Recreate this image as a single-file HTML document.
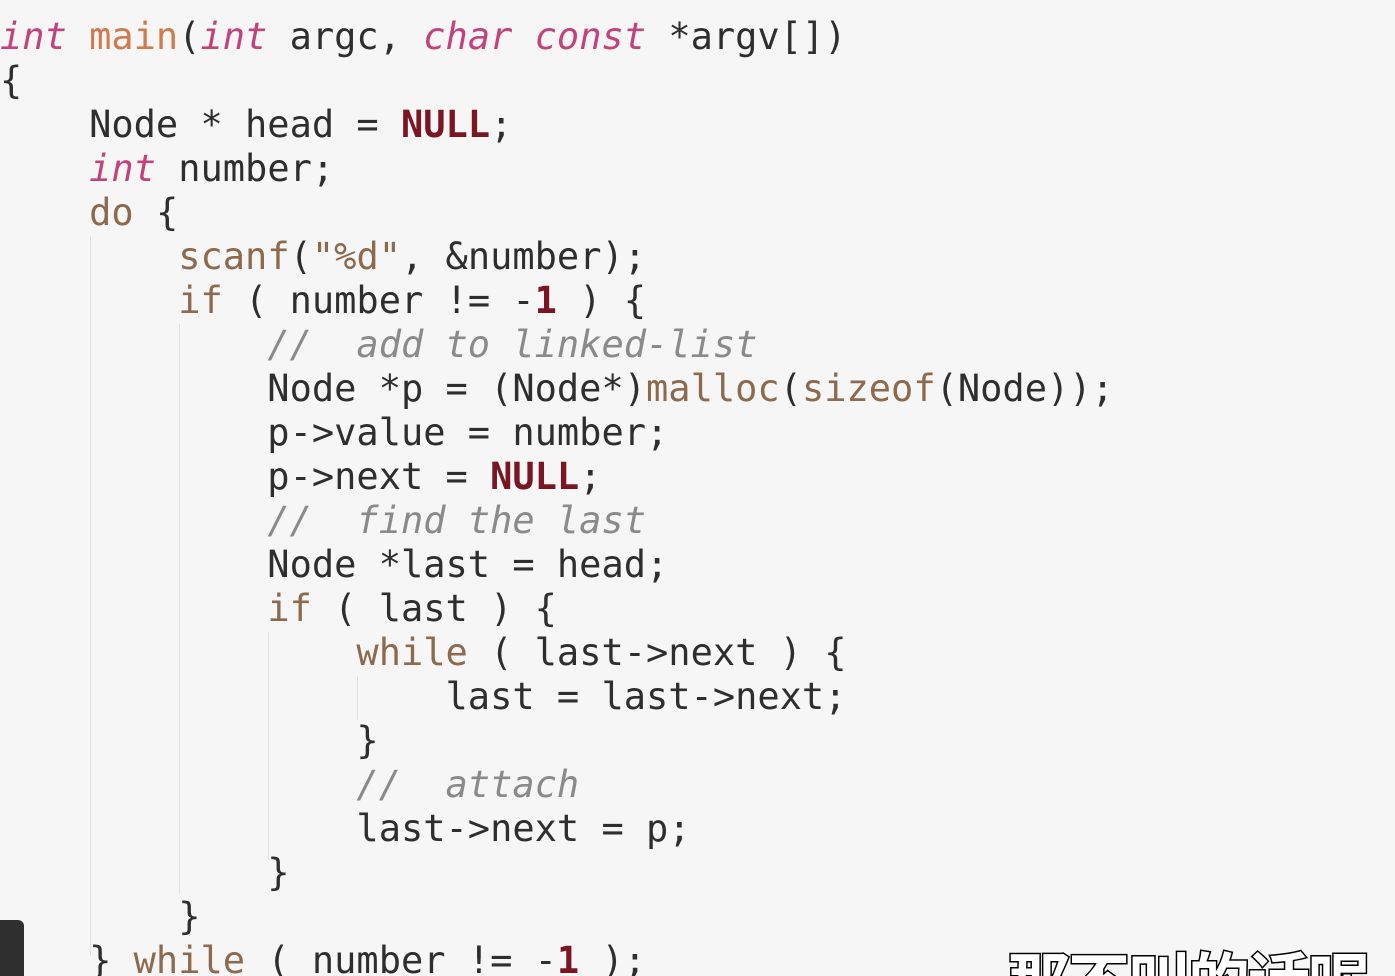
<!DOCTYPE html>
<html><head><meta charset="utf-8"><style>
html,body{margin:0;padding:0;width:1395px;height:976px;overflow:hidden;background:#f6f6f6;position:relative}
pre{position:absolute;left:0;top:15px;margin:0;font-family:"DejaVu Sans Mono","Liberation Mono",monospace;font-size:37px;line-height:44px;color:#2e2e2e;}
.k{color:#c4427c;font-style:italic}
.f{color:#d27a4e}
.w{color:#8d6a4e}
.n{color:#7a1524;font-weight:bold}
.c{color:#8a8a8a;font-style:italic}
.g{position:absolute;width:1px;background:#e2e2e2}
.sub{position:absolute;left:1008px;top:932px;font-family:"Noto Sans CJK SC",sans-serif;font-size:62px;font-weight:bold;color:#fff;-webkit-text-stroke:3px #000;paint-order:stroke fill;letter-spacing:-2px;white-space:nowrap}
.box{position:absolute;left:0;top:920px;width:24px;height:56px;background:#2f2f2f;border-radius:0 6px 0 0}
</style></head><body>
<div class="g" style="left:90px;top:236px;height:720px"></div>
<div class="g" style="left:179px;top:324px;height:570px"></div>
<div class="g" style="left:268px;top:632px;height:228px"></div>
<div class="g" style="left:357px;top:676px;height:44px"></div>
<pre><span class="k">int</span> <span class="f">main</span>(<span class="k">int</span> argc, <span class="k">char</span> <span class="k">const</span> *argv[])
{
    Node * head = <span class="n">NULL</span>;
    <span class="k">int</span> number;
    <span class="w">do</span> {
        <span class="w">scanf</span>(<span class="w">"%d"</span>, &amp;number);
        <span class="w">if</span> ( number != -<span class="n">1</span> ) {
            <span class="c">//  add to linked-list</span>
            Node *p = (Node*)<span class="w">malloc</span>(<span class="w">sizeof</span>(Node));
            p-&gt;value = number;
            p-&gt;next = <span class="n">NULL</span>;
            <span class="c">//  find the last</span>
            Node *last = head;
            <span class="w">if</span> ( last ) {
                <span class="w">while</span> ( last-&gt;next ) {
                    last = last-&gt;next;
                }
                <span class="c">//  attach</span>
                last-&gt;next = p;
            }
        }
    } <span class="w">while</span> ( number != -<span class="n">1</span> );
</pre>
<div class="box"></div>
<div class="sub">那不叫的话呢</div>
</body></html>
